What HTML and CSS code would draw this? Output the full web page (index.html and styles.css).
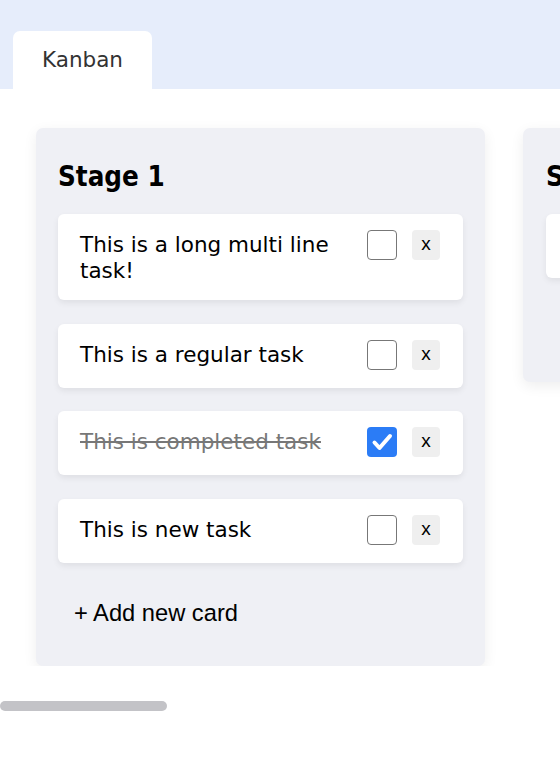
FILE: index.html
```html
<!DOCTYPE html>
<html lang="en">
<head>
<meta charset="utf-8">
<title>Kanban</title>
<link rel="stylesheet" href="styles.css">
</head>
<body>
<header class="header">
  <div class="tab">Kanban</div>
</header>
<main class="board">
  <section class="column">
    <h2 class="stage-title">Stage 1</h2>
    <div class="card">
      <div class="card-text">This is a long multi line task!</div>
      <span class="check"></span>
      <button class="remove">x</button>
    </div>
    <div class="card">
      <div class="card-text">This is a regular task</div>
      <span class="check"></span>
      <button class="remove">x</button>
    </div>
    <div class="card">
      <div class="card-text done">This is completed task</div>
      <span class="check checked"><svg viewBox="0 0 30 30" width="30" height="30"><path d="M7.5 15.5 L12.5 21 L23 9" fill="none" stroke="#fff" stroke-width="4" stroke-linecap="round" stroke-linejoin="round"/></svg></span>
      <button class="remove">x</button>
    </div>
    <div class="card">
      <div class="card-text">This is new task</div>
      <span class="check"></span>
      <button class="remove">x</button>
    </div>
    <button class="add">+ Add new card</button>
  </section>
  <section class="column column-2">
    <h2 class="stage-title">Stage 2</h2>
    <div class="card">
      <div class="card-text">Another task</div>
      <span class="check"></span>
      <button class="remove">x</button>
    </div>
    <button class="add">+ Add new card</button>
  </section>
</main>
<div class="scrolltrack"><div class="thumb"></div></div>
</body>
</html>
```

FILE: styles.css
```css
html, body {
  margin: 0;
  padding: 0;
  background: #ffffff;
  width: 560px;
  overflow: hidden;
}

body {
  font-family: "DejaVu Sans", Verdana, sans-serif;
}

.header {
  height: 89px;
  background: #e6edfb;
  display: flex;
  align-items: flex-end;
  padding-left: 13px;
  box-sizing: border-box;
}

.tab {
  width: 139px;
  height: 58px;
  background: #ffffff;
  border-radius: 7px 7px 0 0;
  color: #333333;
  font-size: 21.5px;
  display: flex;
  align-items: center;
  justify-content: center;
  box-sizing: border-box;
  padding-bottom: 1px;
}

.board {
  display: flex;
  align-items: flex-start;
  gap: 38px;
  padding: 39px 0 0 36px;
  overflow: hidden;
}

.column {
  flex: 0 0 449px;
  box-sizing: border-box;
  padding: 22px 22px 25px 22px;
  background: #eff0f5;
  border-radius: 7px;
  box-shadow: 0 4px 14px rgba(0, 0, 0, 0.07);
  display: flex;
  flex-direction: column;
}

.column-2 {
  padding-left: 23px;
}

.stage-title {
  margin: 10px 0 21px 0;
  font-size: 27.5px;
  line-height: 33px;
  font-weight: bold;
  font-stretch: condensed;
  color: #000;
}

.card {
  background: #ffffff;
  border-radius: 6px;
  box-shadow: 0 3px 6px rgba(0, 0, 0, 0.07);
  display: flex;
  align-items: flex-start;
  box-sizing: border-box;
  min-height: 64px;
  padding: 16px 23px 16px 22px;
  margin-bottom: 23.5px;
}

.card-text {
  flex: 1;
  margin-top: 2px;
  font-size: 21.5px;
  line-height: 26px;
  color: #000;
  padding-right: 14px;
}

.card-text.done {
  color: #777777;
  text-decoration: line-through;
}

.check {
  flex: 0 0 auto;
  width: 30px;
  height: 30px;
  box-sizing: border-box;
  border: 1.5px solid #777777;
  border-radius: 4px;
  background: #fff;
  display: block;
}

.check.checked {
  background: #2b7cf6;
  border: none;
}

.check svg {
  display: block;
}

.remove {
  flex: 0 0 auto;
  width: 28px;
  height: 30px;
  margin-left: 15px;
  border: none;
  border-radius: 4px;
  background: #efefef;
  font-family: "Liberation Sans", Arial, sans-serif;
  font-size: 19px;
  color: #000;
  padding: 0 0 2px 0;
}

.add {
  align-self: stretch;
  text-align: left;
  border: none;
  background: transparent;
  font-family: "Liberation Sans", Arial, sans-serif;
  font-size: 23.7px;
  line-height: 25px;
  color: #000;
  padding: 15px 16px;
  margin: 0;
}

.scrolltrack {
  margin-top: 35px;
  height: 10px;
}

.thumb {
  width: 167px;
  height: 10px;
  border-radius: 5px;
  background: #c3c3c7;
}
```
